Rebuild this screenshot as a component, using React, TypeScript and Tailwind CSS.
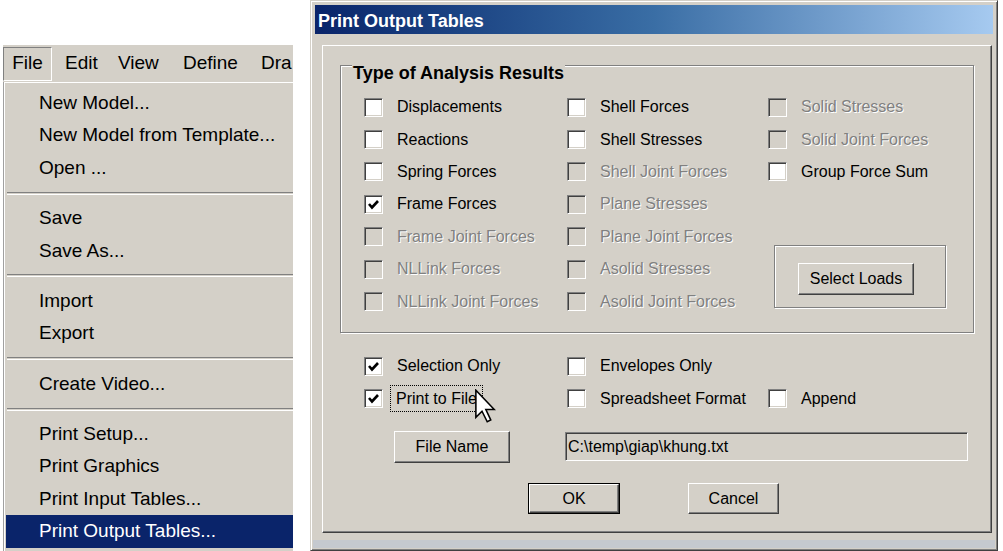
import { ReactNode } from 'react'

const raised =
  'border border-t-white border-l-white border-r-[#404040] border-b-[#404040] shadow-[inset_-1px_-1px_0_#808080,inset_1px_1px_0_#d4d0c8]'
const sunken =
  'border border-t-[#808080] border-l-[#808080] border-b-white border-r-white shadow-[inset_1px_1px_0_#404040,inset_-1px_-1px_0_#d4d0c8]'
const etched = 'border border-[#808080] shadow-[inset_1px_1px_0_#ffffff,1px_1px_0_#ffffff]'

interface CheckProps {
  label: string
  checked?: boolean
  disabled?: boolean
  focused?: boolean
  children?: ReactNode
}

function Check({ label, checked, disabled, focused, children }: CheckProps) {
  return (
    <div className="flex h-[32.4px] items-center">
      <span
        className={`flex h-[19px] w-[19px] shrink-0 items-center justify-center ${sunken} ${
          disabled ? 'bg-[#d4d0c8]' : 'bg-white'
        }`}
      >
        {checked && (
          <svg width="13" height="13" viewBox="0 0 13 13">
            <polyline points="2,6 5,9.5 11,3" fill="none" stroke="#000" strokeWidth="2.6" />
          </svg>
        )}
      </span>
      {focused ? (
        <span className="relative ml-[7px] border border-dotted border-black px-[5px] leading-[25px]">
          {label}
          {children}
        </span>
      ) : (
        <span
          className={`ml-[14px] whitespace-nowrap ${
            disabled ? 'text-[#808080] [text-shadow:1px_1px_0_#ffffff]' : 'text-black'
          }`}
        >
          {label}
        </span>
      )}
    </div>
  )
}

function Button({ children, className }: { children: ReactNode; className: string }) {
  return (
    <div className={`flex items-center justify-center bg-[#d4d0c8] ${raised} ${className}`}>{children}</div>
  )
}

function Cursor() {
  return (
    <svg className="absolute left-[84px] top-[3px]" width="21" height="34" viewBox="0 0 12 19">
      <polygon
        points="0.5,0.5 0.5,16 4,12.5 7,18.5 9,17.5 6.2,11.5 11,11.5"
        fill="#fff"
        stroke="#000"
        strokeWidth="0.9"
        strokeLinejoin="miter"
      />
    </svg>
  )
}

const menu: (string | null)[] = [
  'New Model...',
  'New Model from Template...',
  'Open ...',
  null,
  'Save',
  'Save As...',
  null,
  'Import',
  'Export',
  null,
  'Create Video...',
  null,
  'Print Setup...',
  'Print Graphics',
  'Print Input Tables...',
  'Print Output Tables...',
]

export default function App() {
  return (
    <div className="flex h-[551px] w-[1003px] overflow-hidden bg-white font-['Liberation_Sans',Arial,sans-serif]">
      {/* File menu */}
      <div className="ml-[3px] flex w-[290px] shrink-0 flex-col overflow-hidden pt-[45px] text-[19px] text-black">
        <div className="flex h-[37px] shrink-0 items-center overflow-hidden bg-[#d4d0c8] whitespace-nowrap">
          <div className="flex h-[34px] w-[49px] shrink-0 items-center justify-center border border-t-[#808080] border-l-[#808080] border-b-white border-r-white">
            File
          </div>
          <div className="flex shrink-0 pl-[13px]">
            <span className="w-[53px] shrink-0">Edit</span>
            <span className="w-[65px] shrink-0">View</span>
            <span className="w-[78px] shrink-0">Define</span>
            <span className="shrink-0">Dra</span>
          </div>
        </div>
        <div className="flex-1 border-l border-[#a0a0a0] bg-[#d4d0c8] pl-[2px] pt-[5px] shadow-[inset_1px_1px_0_#ffffff]">
          {menu.map((item, i) =>
            item === null ? (
              <div key={i} className="flex h-[18px] items-center pl-[1px]">
                <div className="h-[3px] w-full border-t border-b border-t-[#808080] border-b-white" />
              </div>
            ) : (
              <div
                key={i}
                className={`flex h-[32.4px] items-center pl-[33px] whitespace-nowrap ${
                  item === 'Print Output Tables...' ? 'bg-[#0a246a] text-white' : ''
                }`}
              >
                {item}
              </div>
            )
          )}
        </div>
      </div>

      {/* Dialog */}
      <div className="ml-[17px] flex h-[551px] w-[688px] shrink-0 flex-col border border-t-[#d4d0c8] border-l-[#d4d0c8] border-r-[#404040] border-b-[#404040] bg-[#d4d0c8] px-[4px] pt-[4px] text-[16px] text-black shadow-[inset_1px_1px_0_#ffffff,inset_-1px_-1px_0_#808080]">
        <div className="flex h-[29px] shrink-0 items-center bg-linear-to-r from-[#0a246a] via-[#3a6ea5] to-[#a6caf0] pl-[3px] pt-[3px] text-[18px] font-bold text-white">
          Print Output Tables
        </div>

        <div className="ml-[7px] mr-[1px] mt-[11px] h-[488px] shrink-0 border border-t-white border-l-white border-r-[#404040] border-b-[#404040] px-[17px] pt-[19px] shadow-[inset_-1px_-1px_0_#808080]">
          {/* Type of Analysis Results */}
          <div className={`relative h-[268px] pl-[23px] pt-[25px] ${etched}`}>
            <span className="absolute -top-[3px] left-[11px] bg-[#d4d0c8] px-[1px] text-[18px] leading-[20px] font-bold">
              Type of Analysis Results
            </span>
            <div className="flex">
              <div className="w-[203px]">
                <Check label="Displacements" />
                <Check label="Reactions" />
                <Check label="Spring Forces" />
                <Check label="Frame Forces" checked />
                <Check label="Frame Joint Forces" disabled />
                <Check label="NLLink Forces" disabled />
                <Check label="NLLink Joint Forces" disabled />
              </div>
              <div className="w-[201px]">
                <Check label="Shell Forces" />
                <Check label="Shell Stresses" />
                <Check label="Shell Joint Forces" disabled />
                <Check label="Plane Stresses" disabled />
                <Check label="Plane Joint Forces" disabled />
                <Check label="Asolid Stresses" disabled />
                <Check label="Asolid Joint Forces" disabled />
              </div>
              <div className="flex-1">
                <Check label="Solid Stresses" disabled />
                <Check label="Solid Joint Forces" disabled />
                <Check label="Group Force Sum" />
                <div className={`ml-[6px] mt-[57px] h-[63px] w-[172px] pl-[23px] pt-[17px] ${etched}`}>
                  <Button className="h-[32px] w-[116px]">Select Loads</Button>
                </div>
              </div>
            </div>
          </div>

          {/* Output options */}
          <div className="mt-[17px] flex flex-col pl-[24px]">
            <div className="flex">
              <div className="w-[203px]">
                <Check label="Selection Only" checked />
                <Check label="Print to File" checked focused>
                  <Cursor />
                </Check>
              </div>
              <div className="w-[201px]">
                <Check label="Envelopes Only" />
                <Check label="Spreadsheet Format" />
              </div>
              <div>
                <div className="h-[32.4px]" />
                <Check label="Append" />
              </div>
            </div>
            <div className="mt-[16.4px] flex items-start">
              <Button className="ml-[30px] h-[32px] w-[116px]">File Name</Button>
              <div className={`ml-[55px] mt-[1px] flex h-[29px] w-[403px] items-center bg-[#d4d0c8] pl-[2px] ${sunken}`}>
                C:\temp\giap\khung.txt
              </div>
            </div>
            <div className="mt-[20px] flex">
              <div className="ml-[164px] border border-black">
                <Button className="h-[29px] w-[90px]">OK</Button>
              </div>
              <Button className="ml-[68px] h-[31px] w-[91px]">Cancel</Button>
            </div>
          </div>
        </div>

        <div className="-mx-[2px] mt-[7px] h-[8px] shrink-0 bg-[#c5c9cf]" />
      </div>
    </div>
  )
}
